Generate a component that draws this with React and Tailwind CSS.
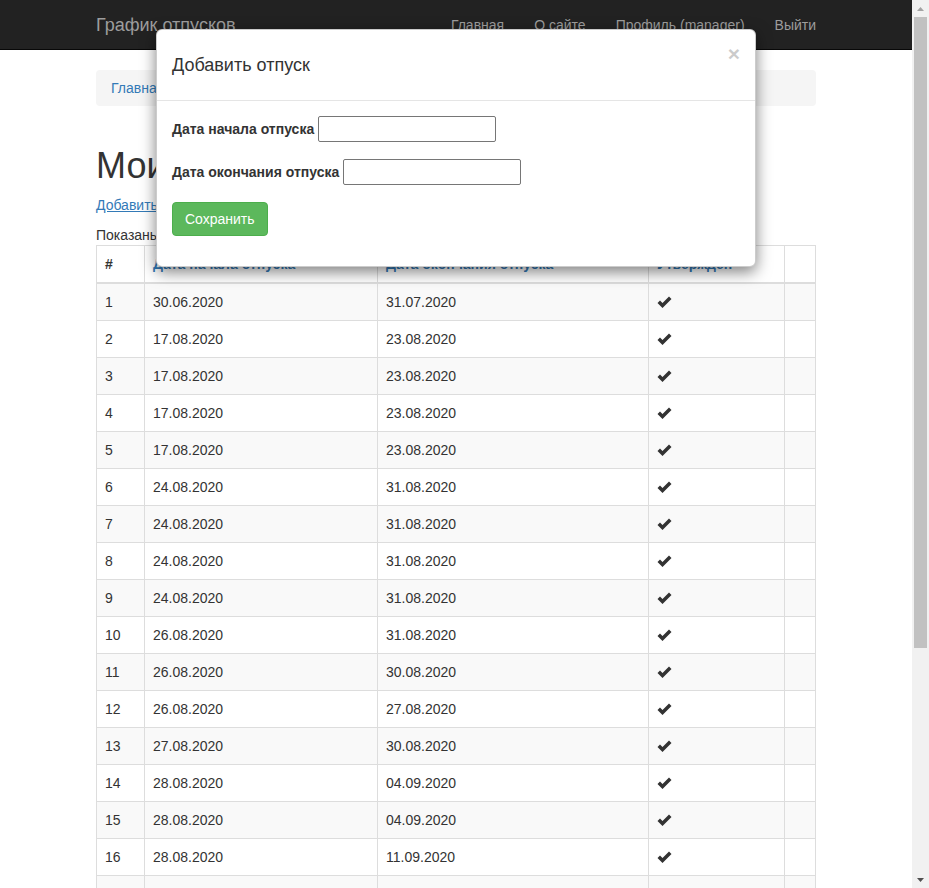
const rows = [
  ["30.06.2020", "31.07.2020"],
  ["17.08.2020", "23.08.2020"],
  ["17.08.2020", "23.08.2020"],
  ["17.08.2020", "23.08.2020"],
  ["17.08.2020", "23.08.2020"],
  ["24.08.2020", "31.08.2020"],
  ["24.08.2020", "31.08.2020"],
  ["24.08.2020", "31.08.2020"],
  ["24.08.2020", "31.08.2020"],
  ["26.08.2020", "31.08.2020"],
  ["26.08.2020", "30.08.2020"],
  ["26.08.2020", "27.08.2020"],
  ["27.08.2020", "30.08.2020"],
  ["28.08.2020", "04.09.2020"],
  ["28.08.2020", "04.09.2020"],
  ["28.08.2020", "11.09.2020"],
  ["31.08.2020", "14.09.2020"],
  ["01.09.2020", "15.09.2020"],
];

const CheckIcon = () => (
  <svg width="15" height="12" viewBox="0 0 15 12" className="block">
    <path d="M0.5 7 L3 4.5 L5.5 7 L12 0.5 L14.5 3 L5.5 12 Z" fill="#333" />
  </svg>
);

function Scrollbar() {
  return (
    <div className="w-[17px] h-full bg-[#f1f1f1] flex flex-col shrink-0">
      <div className="h-[17px] flex items-center justify-center">
        <svg width="7" height="4" viewBox="0 0 7 4">
          <path d="M0 4 L3.5 0 L7 4 Z" fill="#a3a3a3" />
        </svg>
      </div>
      <div className="mx-[2px] h-[631px] bg-[#c1c1c1]" />
      <div className="flex-1" />
      <div className="h-[17px] flex items-center justify-center">
        <svg width="7" height="4" viewBox="0 0 7 4">
          <path d="M0 0 L7 0 L3.5 4 Z" fill="#505050" />
        </svg>
      </div>
    </div>
  );
}

function AddModal() {
  return (
    <div className="absolute inset-x-0 top-[29px] flex justify-center">
      <div className="w-[600px] bg-white border border-[rgba(0,0,0,0.2)] rounded-[6px] shadow-[0_5px_15px_rgba(0,0,0,0.5)]">
        <div className="p-[15px] border-b border-[#e5e5e5] flex items-start">
          <h4 className="flex-1 my-[10px] text-[18px] leading-[20px] font-normal text-[#333]">Добавить отпуск</h4>
          <button className="mt-[-2px] text-[21px] leading-[21px] font-bold text-black opacity-20">×</button>
        </div>
        <div className="px-[15px] pt-[15px] pb-[30px]">
          <div className="flex items-center h-[26px] mb-[17px]">
            <label className="font-bold mr-[4px]">Дата начала отпуска</label>
            <input type="text" className="w-[178px] h-[26px] border border-[#767676] rounded-[2px] px-[2px]" />
          </div>
          <div className="flex items-center h-[26px] mb-[17px]">
            <label className="font-bold mr-[4px]">Дата окончания отпуска</label>
            <input type="text" className="w-[178px] h-[26px] border border-[#767676] rounded-[2px] px-[2px]" />
          </div>
          <button className="h-[34px] px-[12px] bg-[#5cb85c] border border-[#4cae4c] rounded-[4px] text-white text-[14px]">
            Сохранить
          </button>
        </div>
      </div>
    </div>
  );
}

export default function App() {
  return (
    <div className="flex h-[888px] overflow-hidden bg-white text-[14px] leading-[20px] text-[#333] font-['Liberation_Sans',Arial,sans-serif]">
      <div className="relative flex-1 min-w-0">
        {/* Navbar */}
        <nav className="h-[50px] bg-[#222] border-b border-[#080808] mb-[20px]">
          <div className="w-[750px] mx-auto px-[15px] flex justify-between">
            <a className="py-[15px] text-[18px] leading-[20px] text-[#9d9d9d]">График отпусков</a>
            <ul className="flex mr-[-15px]">
              <li><a className="block p-[15px] text-[#9d9d9d]">Главная</a></li>
              <li><a className="block p-[15px] text-[#9d9d9d]">О сайте</a></li>
              <li><a className="block p-[15px] text-[#9d9d9d]">Профиль (manager)</a></li>
              <li><a className="block p-[15px] text-[#9d9d9d]">Выйти</a></li>
            </ul>
          </div>
        </nav>

        <div className="w-[750px] mx-auto px-[15px]">
          <ul className="flex bg-[#f5f5f5] rounded-[4px] px-[15px] py-[8px]">
            <li><a className="text-[#337ab7]">Главная</a></li>
            <li className="px-[5px] text-[#ccc]">/</li>
            <li className="text-[#777]">Мои отпуска</li>
          </ul>

          <h1 className="mt-[40px] mb-[9px] text-[36px] leading-[40px] font-normal">Мои отпуска</h1>
          <p className="mb-[10px]">
            <a className="text-[#337ab7] underline">Добавить отпуск</a>
          </p>
          <div>Показаны записи 1-18 из 18.</div>

          <table className="w-full table-fixed border-collapse border border-[#ddd]">
            <thead>
              <tr>
                <th className="w-[48px] p-[8px] border border-[#ddd] border-b-2 text-left font-bold">#</th>
                <th className="w-[233px] p-[8px] border border-[#ddd] border-b-2 text-left font-bold text-[#337ab7]">Дата начала отпуска</th>
                <th className="w-[271px] p-[8px] border border-[#ddd] border-b-2 text-left font-bold text-[#337ab7]">Дата окончания отпуска</th>
                <th className="w-[136px] p-[8px] border border-[#ddd] border-b-2 text-left font-bold text-[#337ab7]">Утвержден</th>
                <th className="p-[8px] border border-[#ddd] border-b-2" />
              </tr>
            </thead>
            <tbody>
              {rows.map((r, i) => (
                <tr key={i} className={i % 2 === 0 ? "bg-[#f9f9f9]" : "bg-white"}>
                  <td className="p-[8px] border border-[#ddd]">{i + 1}</td>
                  <td className="p-[8px] border border-[#ddd]">{r[0]}</td>
                  <td className="p-[8px] border border-[#ddd]">{r[1]}</td>
                  <td className="p-[8px] border border-[#ddd]">
                    <div className="h-[20px] flex items-center">
                      <CheckIcon />
                    </div>
                  </td>
                  <td className="p-[8px] border border-[#ddd]" />
                </tr>
              ))}
            </tbody>
          </table>
        </div>

        <AddModal />
      </div>
      <Scrollbar />
    </div>
  );
}
